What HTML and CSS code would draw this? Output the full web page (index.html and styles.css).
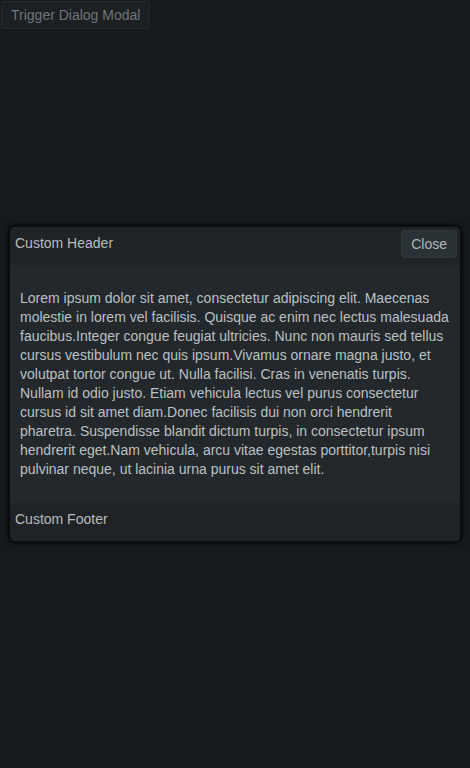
FILE: index.html
```html
<!DOCTYPE html>
<html>
<head>
<meta charset="utf-8">
<link rel="stylesheet" href="styles.css">
</head>
<body>
<button class="trigger">Trigger Dialog Modal</button>
<div class="overlay">
  <div class="modal">
    <div class="modal-header">
      <span class="title">Custom Header</span>
      <button class="close">Close</button>
    </div>
    <div class="modal-body">
      <p>Lorem ipsum dolor sit amet, consectetur adipiscing elit. Maecenas molestie in lorem vel facilisis. Quisque ac enim nec lectus malesuada faucibus.Integer congue feugiat ultricies. Nunc non mauris sed tellus cursus vestibulum nec quis ipsum.Vivamus ornare magna justo, et volutpat tortor congue ut. Nulla facilisi. Cras in venenatis turpis. Nullam id odio justo. Etiam vehicula lectus vel purus consectetur cursus id sit amet diam.Donec facilisis dui non orci hendrerit pharetra. Suspendisse blandit dictum turpis, in consectetur ipsum hendrerit eget.Nam vehicula, arcu vitae egestas porttitor,turpis nisi pulvinar neque, ut lacinia urna purus sit amet elit.</p>
    </div>
    <div class="modal-footer">Custom Footer</div>
  </div>
</div>
</body>
</html>
```
FILE: styles.css
```css
html, body {
  margin: 0;
  height: 100%;
  background: #171a1d;
  font-family: "Liberation Sans", Arial, sans-serif;
  font-size: 14px;
}
.trigger {
  margin: 1px;
  height: 28px;
  padding: 0 9px;
  background: #1c2023;
  border: 1px solid #262a2d;
  border-radius: 3px;
  color: #6e757a;
  font-family: inherit;
  font-size: 14px;
}
.overlay {
  position: fixed;
  inset: 0;
  display: flex;
  align-items: center;
  justify-content: center;
}
.modal {
  width: 450px;
  height: 314px;
  display: flex;
  flex-direction: column;
  border-radius: 5px;
  overflow: hidden;
  background: #22282b;
  box-shadow: 0 0 0 1px #0b0d0e, 0 0 5px 2px #000;
}
.modal-header {
  height: 38px;
  box-sizing: border-box;
  padding: 3px 3px 0 5px;
  display: flex;
  justify-content: space-between;
  align-items: flex-start;
  background: #1f2326;
}
.title {
  line-height: 26px;
  color: #b8bcbf;
}
.close {
  height: 28px;
  padding: 0 9px;
  background: #2b3236;
  border: 1px solid #30373b;
  border-radius: 3px;
  color: #b0b4b7;
  font-family: inherit;
  font-size: 14px;
}
.modal-body {
  flex: 1;
  padding: 10px;
  background: #22282b;
}
.modal-body p {
  margin: 14px 0;
  line-height: 19px;
  color: #bcc0c2;
}
.modal-footer {
  height: 39px;
  box-sizing: border-box;
  padding: 2px 5px 0;
  line-height: 28px;
  color: #b8bcbf;
  background: #1f2326;
}
```
